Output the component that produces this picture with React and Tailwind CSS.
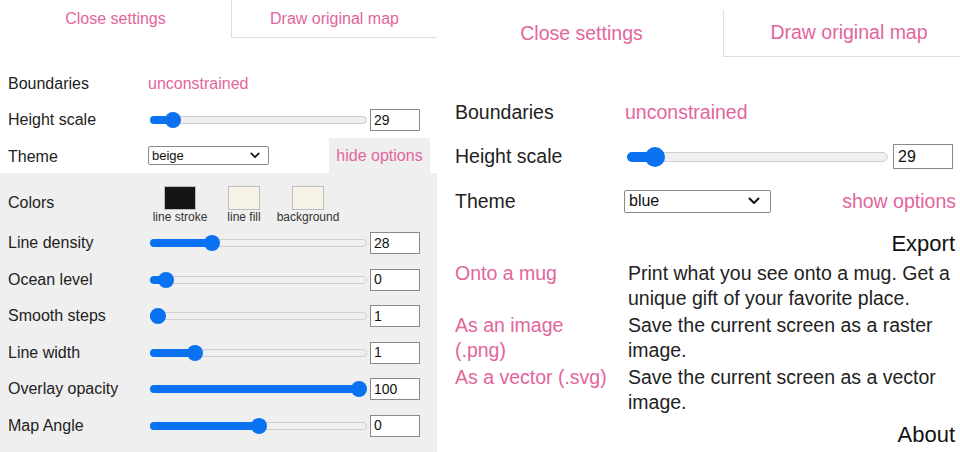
import React from "react";

const PINK = "text-[#e2659c]";

function Chevron({ big }) {
  return (
    <svg viewBox="0 0 12 8" className={big ? "w-[12px] h-[8px]" : "w-[10px] h-[7px]"} fill="none">
      <path d="M1.5 1.5 6 6l4.5-4.5" stroke="#111" strokeWidth="2" strokeLinecap="round" strokeLinejoin="round" />
    </svg>
  );
}

function Select({ value, big }) {
  return (
    <div
      className={`flex items-center justify-between border border-[#8a8a8a] rounded-[2px] bg-white text-[#111] ${
        big ? "w-[147px] h-[23px] pl-[4px] pr-[10px] text-[16px]" : "w-[121px] h-[19px] pl-[3px] pr-[8px] text-[13px]"
      }`}
    >
      <span>{value}</span>
      <Chevron big={big} />
    </div>
  );
}

function NumBox({ value, big }) {
  return (
    <div
      className={`flex items-center border border-[#8a8a8a] bg-white text-[#111] ${
        big ? "w-[60px] h-[25px] ml-[5px] pl-[4px] text-[16px]" : "w-[50px] h-[22px] ml-[3px] pl-[3px] text-[14px]"
      }`}
    >
      {value}
    </div>
  );
}

function Slider({ pct, big }) {
  return (
    <div className={`relative ml-[2px] ${big ? "w-[261px] h-[20px]" : "w-[217px] h-[16px]"}`}>
      <div
        className={`absolute left-0 right-0 top-1/2 -translate-y-1/2 rounded-full border border-[#cfcfcf] bg-[#efefef] ${
          big ? "h-[10px]" : "h-[8px]"
        }`}
      />
      <div className={`absolute inset-y-0 ${big ? "left-[10px] right-[10px]" : "left-[8px] right-[8px]"}`}>
        <div
          className={`absolute top-1/2 -translate-y-1/2 rounded-full bg-[#0a72f0] ${
            big ? "-left-[10px] h-[10px]" : "-left-[8px] h-[8px]"
          }`}
          style={{ width: `calc(${pct}% + ${big ? 10 : 8}px)` }}
        />
        <div
          className={`absolute top-1/2 -translate-y-1/2 -translate-x-1/2 rounded-full bg-[#0a72f0] ${
            big ? "w-[20px] h-[20px]" : "w-[16px] h-[16px]"
          }`}
          style={{ left: `${pct}%` }}
        />
      </div>
    </div>
  );
}

function Tabs({ big }) {
  return (
    <div className={`flex ${big ? "h-[47px] text-[19.5px]" : "h-[38px] text-[16px]"}`}>
      <div className={`flex items-center justify-center shrink-0 ${PINK} ${big ? "w-[283px]" : "w-[231px]"}`}>
        Close settings
      </div>
      <div
        className={`flex items-center justify-center shrink-0 border-l border-b border-[#dedede] ${PINK} ${
          big ? "w-[251px]" : "w-[206px]"
        }`}
      >
        Draw original map
      </div>
    </div>
  );
}

const options = [
  { label: "Line density", pct: 27, value: "28" },
  { label: "Ocean level", pct: 4, value: "0" },
  { label: "Smooth steps", pct: 0, value: "1" },
  { label: "Line width", pct: 18.5, value: "1" },
  { label: "Overlay opacity", pct: 100, value: "100" },
  { label: "Map Angle", pct: 50, value: "0" },
];

const swatches = [
  { name: "line stroke", color: "bg-[#151515]" },
  { name: "line fill", color: "bg-[#f6f3e6]" },
  { name: "background", color: "bg-[#f6f3e6]" },
];

function LeftPanel() {
  return (
    <div className="w-[440px] shrink-0 text-[16px] text-[#222]">
      <Tabs />
      <div className="mt-[28px]">
        <div className="flex items-center h-[36px]">
          <div className="w-[148px] pl-2">Boundaries</div>
          <div className={PINK}>unconstrained</div>
        </div>
        <div className="flex items-center h-[36px]">
          <div className="w-[148px] pl-2">Height scale</div>
          <Slider pct={7.5} />
          <NumBox value="29" />
        </div>
        <div className="flex items-center h-[35px]">
          <div className="w-[148px] pl-2 pt-[2px]">Theme</div>
          <Select value="beige" />
          <div className={`ml-auto mr-[10px] h-full w-[101px] flex items-center justify-center bg-[#efefef] ${PINK}`}>
            hide options
          </div>
        </div>
      </div>
      <div className="w-[437px] bg-[#efefef] pb-[9px]">
        <div className="flex items-center h-[52px]">
          <div className="w-[148px] pl-2 pt-[8px]">Colors</div>
          <div className="flex mt-[12px]">
            {swatches.map((s) => (
              <div key={s.name} className="w-[64px] flex flex-col items-center">
                <div className={`w-[32px] h-[24px] border border-[#bdbdbd] ${s.color}`} />
                <div className="text-[12px] leading-[14px] text-[#333]">{s.name}</div>
              </div>
            ))}
          </div>
        </div>
        {options.map((o) => (
          <div key={o.label} className="flex items-center h-[36.5px]">
            <div className="w-[148px] pl-2">{o.label}</div>
            <Slider pct={o.pct} />
            <NumBox value={o.value} />
          </div>
        ))}
      </div>
    </div>
  );
}

const exportsList = [
  { label: "Onto a mug", desc: "Print what you see onto a mug. Get a unique gift of your favorite place." },
  { label: "As an image (.png)", desc: "Save the current screen as a raster image." },
  { label: "As a vector (.svg)", desc: "Save the current screen as a vector image." },
];

function RightPanel() {
  return (
    <div className="w-[520px] shrink-0 pt-[10px] text-[19.5px] text-[#222]">
      <Tabs big />
      <div className="mt-[33px]">
        <div className="flex items-center h-[44.5px]">
          <div className="w-[185px] pl-[15px]">Boundaries</div>
          <div className={PINK}>unconstrained</div>
        </div>
        <div className="flex items-center h-[44.5px]">
          <div className="w-[185px] pl-[15px]">Height scale</div>
          <Slider pct={7.5} big />
          <NumBox value="29" big />
        </div>
        <div className="flex items-center h-[44.5px]">
          <div className="w-[184px] pl-[15px]">Theme</div>
          <Select value="blue" big />
          <div className={`ml-auto mr-[4px] ${PINK}`}>show options</div>
        </div>
      </div>
      <div className="h-[40px] flex items-center justify-end pr-[5px] text-[22px] text-[#111]">Export</div>
      <div className="flex flex-col gap-[2px] -mt-[3px]">
        {exportsList.map((e) => (
          <div key={e.label} className="flex leading-[25px]">
            <div className={`w-[185px] pl-[15px] pr-[10px] ${PINK}`}>{e.label}</div>
            <div className="ml-[3px] w-[330px]">{e.desc}</div>
          </div>
        ))}
      </div>
      <div className="mt-[5px] h-[30px] flex items-center justify-end pr-[5px] text-[22px] text-[#111]">About</div>
    </div>
  );
}

export default function App() {
  return (
    <div className="w-[960px] h-[452px] overflow-hidden bg-white flex" style={{ fontFamily: '"Liberation Sans", Arial, sans-serif' }}>
      <LeftPanel />
      <RightPanel />
    </div>
  );
}
